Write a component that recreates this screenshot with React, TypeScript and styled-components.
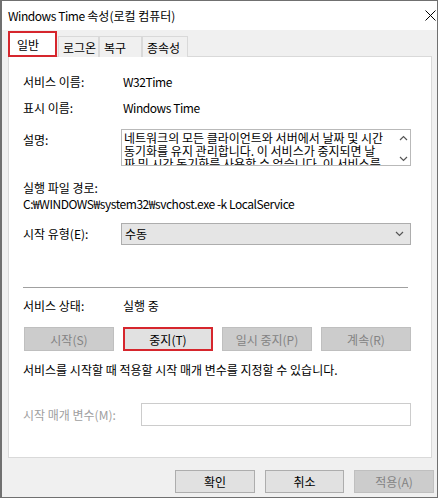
import React from "react";
import styled, { createGlobalStyle } from "styled-components";

const GlobalStyle = createGlobalStyle`
  html, body {
    margin: 0;
    padding: 0;
    background: #ffffff;
  }
  body {
    font-family: "Noto Sans CJK KR", "Noto Sans", sans-serif;
    font-size: 12px;
    color: #000000;
  }
`;

const Window = styled.div`
  width: 438px;
  height: 498px;
  box-sizing: border-box;
  border: 1px solid #707070;
  border-left-width: 2px;
  background: #f0f0f0;
  display: flex;
  flex-direction: column;
`;

const TitleBar = styled.div`
  height: 29px;
  background: #ffffff;
  display: flex;
  align-items: center;
  justify-content: space-between;
  padding: 0 1px 0 6px;
`;

// Latin runs are set a little tighter, as Malgun Gothic's Latin glyphs are
const Latin = styled.span`
  letter-spacing: -0.45px;
`;

const Body = styled.div`
  flex: 1;
  padding: 2px 5px 0 6px;
  display: flex;
  flex-direction: column;
`;

const TabRow = styled.div`
  display: flex;
  align-items: flex-end;
  height: 25px;
  margin-bottom: -1px;
  position: relative;
  z-index: 1;
`;

const Tab = styled.div<{ $active?: boolean; $width: number }>`
  box-sizing: border-box;
  width: ${(p) => p.$width}px;
  height: ${(p) => (p.$active ? 26 : 21)}px;
  padding-left: ${(p) => (p.$active ? 7 : 4)}px;
  display: flex;
  align-items: center;
  background: ${(p) => (p.$active ? "#ffffff" : "#f0f0f0")};
  border: ${(p) => (p.$active ? "2px solid #d6262d" : "1px solid #d9d9d9")};
  border-bottom: ${(p) => (p.$active ? "2px solid #d6262d" : "none")};
  margin-right: ${(p) => (p.$active ? 1 : 0)}px;
`;

const Panel = styled.div`
  box-sizing: border-box;
  width: 424px;
  height: 402px;
  background: #ffffff;
  border: 1px solid #d9d9d9;
  padding: 17px 20px 0 14px;
  display: flex;
  flex-direction: column;
`;

const Row = styled.div<{ $mt?: number; $h?: number; $top?: boolean }>`
  display: flex;
  align-items: ${(p) => (p.$top ? "flex-start" : "center")};
  margin-top: ${(p) => p.$mt ?? 0}px;
  min-height: ${(p) => p.$h ?? 16}px;
  line-height: 16px;
  white-space: nowrap;
`;

const Label = styled.div<{ $width?: number; $disabled?: boolean; $pt?: number }>`
  width: ${(p) => p.$width ?? 98}px;
  flex-shrink: 0;
  padding-top: ${(p) => p.$pt ?? 0}px;
  color: ${(p) => (p.$disabled ? "#a0a0a0" : "#000000")};
`;

const Value = styled.div`
  padding-left: 2px;
`;

const TextBox = styled.div`
  flex: 1;
  box-sizing: border-box;
  height: 37px;
  border: 1px solid #b9b9b9;
  display: flex;
  overflow: hidden;
`;

const TextLines = styled.div`
  flex: 1;
  padding: 1px 0 0 2px;
  overflow: hidden;
`;

const TextLine = styled.div`
  height: 13px;
  line-height: 13px;
`;

const ScrollBar = styled.div`
  width: 14px;
  display: flex;
  flex-direction: column;
  justify-content: space-between;
  align-items: center;
  padding: 5px 0 3px;
`;

const Select = styled.div`
  flex: 1;
  box-sizing: border-box;
  height: 22px;
  background: #e5e5e5;
  border: 1px solid #adadad;
  display: flex;
  align-items: center;
  justify-content: space-between;
  padding: 0 6px 0 3px;
`;

const Separator = styled.div`
  height: 1px;
  background: #a0a0a0;
  margin: 42px 3px 0 0;
`;

const ButtonRow = styled.div`
  display: flex;
  justify-content: space-between;
  margin-top: 13px;
  margin-left: 1px;
`;

const Button = styled.div<{ $disabled?: boolean; $marked?: boolean; $width?: number; $h?: number }>`
  box-sizing: border-box;
  width: ${(p) => p.$width ?? 90}px;
  height: ${(p) => p.$h ?? 24}px;
  display: flex;
  align-items: center;
  justify-content: center;
  background: ${(p) => (p.$disabled ? "#cccccc" : "#e1e1e1")};
  border: ${(p) =>
    p.$marked ? "2px solid #d6262d" : p.$disabled ? "1px solid #bfbfbf" : "1px solid #adadad"};
  color: ${(p) => (p.$disabled ? "#838383" : "#000000")};
`;

const Input = styled.div`
  flex: 1;
  box-sizing: border-box;
  height: 23px;
  background: #ffffff;
  border: 1px solid #cccccc;
`;

const Footer = styled.div`
  display: flex;
  justify-content: flex-end;
  gap: 10px;
  margin-top: 12px;
  margin-right: -2px;
`;

function Chevron({ up }: { up?: boolean }) {
  return (
    <svg width="9" height="6" viewBox="0 0 9 6">
      <polyline
        points={up ? "1,5 4.5,1.5 8,5" : "1,1 4.5,4.5 8,1"}
        fill="none"
        stroke="#555"
        strokeWidth="1.2"
      />
    </svg>
  );
}

export default function App() {
  return (
    <>
      <GlobalStyle />
      <Window>
        <TitleBar>
          <span>
            <Latin>Windows Time</Latin> 속성(로컬 컴퓨터)
          </span>
          <svg width="11" height="11" viewBox="0 0 11 11">
            <path d="M0.5 0.5 L10.5 10.5 M10.5 0.5 L0.5 10.5" stroke="#000" strokeWidth="1" />
          </svg>
        </TitleBar>
        <Body>
          <TabRow>
            <Tab $active $width={49}>일반</Tab>
            <Tab $width={41}>로그온</Tab>
            <Tab $width={43}>복구</Tab>
            <Tab $width={46}>종속성</Tab>
          </TabRow>
          <Panel>
            <Row>
              <Label>서비스 이름:</Label>
              <Value>
                <Latin>W32Time</Latin>
              </Value>
            </Row>
            <Row $mt={10}>
              <Label>표시 이름:</Label>
              <Value>
                <Latin>Windows Time</Latin>
              </Value>
            </Row>
            <Row $mt={13} $h={37} $top>
              <Label $pt={3}>설명:</Label>
              <TextBox>
                <TextLines>
                  <TextLine>네트워크의 모든 클라이언트와 서버에서 날짜 및 시간</TextLine>
                  <TextLine>동기화를 유지 관리합니다. 이 서비스가 중지되면 날</TextLine>
                  <TextLine>짜 및 시간 동기화를 사용할 수 없습니다. 이 서비스를</TextLine>
                </TextLines>
                <ScrollBar>
                  <Chevron up />
                  <Chevron />
                </ScrollBar>
              </TextBox>
            </Row>
            <Row $mt={14}>
              <Label>실행 파일 경로:</Label>
            </Row>
            <Row>
              <Latin>C:₩WINDOWS₩system32₩svchost.exe -k LocalService</Latin>
            </Row>
            <Row $mt={11} $h={22}>
              <Label>시작 유형(E):</Label>
              <Select>
                <span>수동</span>
                <Chevron />
              </Select>
            </Row>
            <Separator />
            <Row $mt={10}>
              <Label>서비스 상태:</Label>
              <Value>실행 중</Value>
            </Row>
            <ButtonRow>
              <Button $disabled>시작(S)</Button>
              <Button $marked>중지(T)</Button>
              <Button $disabled>일시 중지(P)</Button>
              <Button $disabled>계속(R)</Button>
            </ButtonRow>
            <Row $mt={11}>서비스를 시작할 때 적용할 시작 매개 변수를 지정할 수 있습니다.</Row>
            <Row $mt={25} $h={23}>
              <Label $width={118} $disabled>
                시작 매개 변수(M):
              </Label>
              <Input />
            </Row>
          </Panel>
          <Footer>
            <Button $width={80} $h={23}>확인</Button>
            <Button $width={79} $h={23}>취소</Button>
            <Button $width={80} $h={23} $disabled>
              적용(A)
            </Button>
          </Footer>
        </Body>
      </Window>
    </>
  );
}
